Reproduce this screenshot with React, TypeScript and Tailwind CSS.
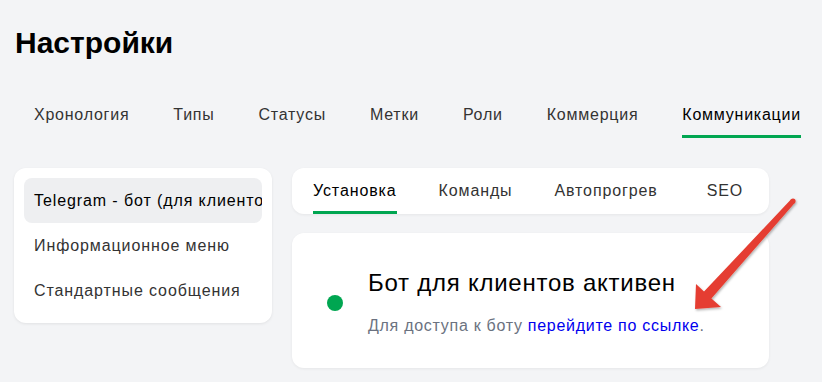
import React from "react";

const mainTabs = ["Хронология", "Типы", "Статусы", "Метки", "Роли", "Коммерция", "Коммуникации"];
const subTabs = ["Установка", "Команды", "Автопрогрев", "SEO"];
const menu = ["Telegram - бот (для клиентов)", "Информационное меню", "Стандартные сообщения"];

export default function App() {
  return (
    <div
      className="relative min-h-screen w-[822px] h-[382px] overflow-hidden bg-[#f3f4f6] px-[14px] pt-[25px]"
      style={{ fontFamily: '"Liberation Sans", Arial, sans-serif' }}
    >
      <h1 className="ml-[1px] text-[30px] leading-[36px] font-bold text-black">Настройки</h1>

      <div className="mt-[42px] ml-[20px] flex gap-[44px]">
        {mainTabs.map((t, i) => (
          <div
            key={t}
            className={
              "pb-[8px] border-b-[3px] text-[16px] leading-[24px] tracking-[0.76px] " +
              (i === mainTabs.length - 1 ? "border-[#00a651] text-black" : "border-transparent text-[#333]")
            }
          >
            {t}
          </div>
        ))}
      </div>

      <div className="mt-[30px] flex gap-[20px] items-start">
        <div className="w-[258px] rounded-xl bg-white p-[10px] shadow-[0_1px_3px_rgba(0,0,0,0.08)]">
          {menu.map((m, i) => (
            <div
              key={m}
              className={
                "h-[45px] flex items-center px-[10px] rounded-lg whitespace-nowrap overflow-hidden text-[16px] tracking-[0.9px] " +
                (i === 0 ? "bg-[#eeeff1] text-black" : "text-[#333]")
              }
            >
              {m}
            </div>
          ))}
        </div>

        <div className="w-[477px]">
          <div className="h-[46px] rounded-xl bg-white pl-[21px] pt-[11px] flex gap-[42px] shadow-[0_1px_3px_rgba(0,0,0,0.06)]">
            {subTabs.map((t, i) => (
              <div
                key={t}
                className={
                  "pb-[8px] border-b-[3px] text-[16px] leading-[24px] tracking-[0.88px] " +
                  (i === 0 ? "border-[#00a651] text-black" : "border-transparent text-[#333]") +
                  (i === 3 ? " ml-[7px]" : "")
                }
              >
                {t}
              </div>
            ))}
          </div>

          <div className="mt-[19px] rounded-xl bg-white pl-[35px] pt-[34px] pb-[30px] flex items-center shadow-[0_1px_3px_rgba(0,0,0,0.06)]">
            <div className="w-[16px] h-[16px] rounded-full bg-[#00a651] shrink-0" />
            <div className="ml-[25px]">
              <div className="text-[24px] leading-[32px] tracking-[0.75px] text-black">Бот для клиентов активен</div>
              <div className="mt-[15px] text-[16px] leading-[24px] tracking-[0.72px] text-[#6b7280]">
                Для доступа к боту <span className="text-[#0000ee]">перейдите по ссылке</span>.
              </div>
            </div>
          </div>
        </div>
      </div>

      <svg className="absolute left-0 top-0 pointer-events-none" width="822" height="382" viewBox="0 0 822 382">
        <defs>
          <filter id="sh" x="-20%" y="-20%" width="140%" height="140%">
            <feDropShadow dx="1" dy="1.5" stdDeviation="0.8" floodColor="#000" floodOpacity="0.3" />
          </filter>
        </defs>
        <g filter="url(#sh)" fill="#e53e30">
          <circle cx="793" cy="201" r="2.6" />
          <polygon points="791.1,199.3 794.9,202.7 711.4,298.4 721,307 695,309 696,284 704,291.6" />
        </g>
      </svg>
    </div>
  );
}
